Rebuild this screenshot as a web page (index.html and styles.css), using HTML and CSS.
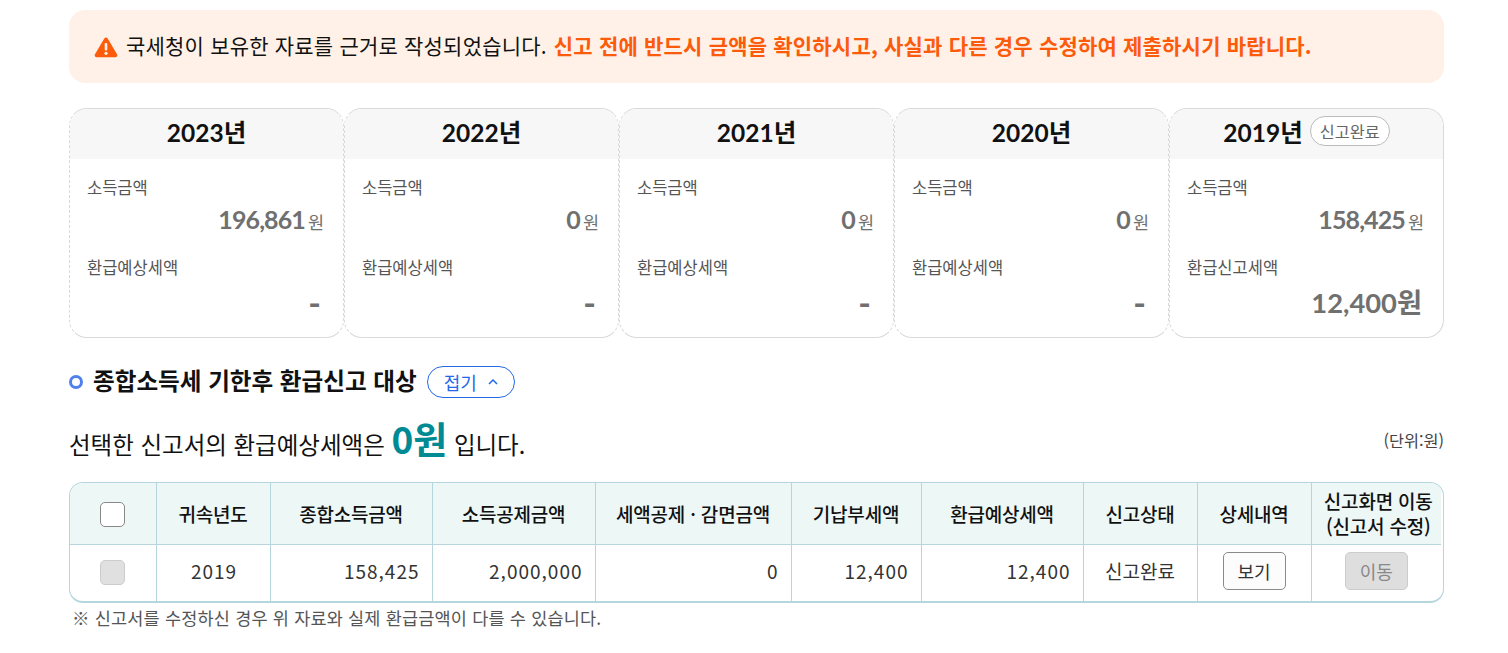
FILE: index.html
```html
<!DOCTYPE html>
<html lang="ko">
<head>
    <meta charset="UTF-8">
    <meta name="viewport" content="width=device-width, initial-scale=1.0">
    <title>종합소득세 기한후 환급신고</title>
    <link rel="stylesheet" href="styles.css">
</head>
<body>
    <div class="container">
        <!-- Notice -->
        <div class="notice">
            <svg class="notice-icon" width="24" height="22" viewBox="0 0 24 22">
                <path d="M12 1.5c-.7 0-1.3.4-1.7 1L1 18.3c-.8 1.4.1 3 1.700 3h18.600c1.600 0 2.500-1.600 1.700-3L13.700 2.500c-.4-.6-1-1-1.700-1z" fill="#fc5b0c"/>
                <rect x="10.700" y="7" width="2.600" height="7.500" rx="1" fill="#fff3e9"/>
                <circle cx="12" cy="17.300" r="1.600" fill="#fff3e9"/>
            </svg>
            <span>국세청이 보유한 자료를 근거로 작성되었습니다.</span>
            <strong>신고 전에 반드시 금액을 확인하시고, 사실과 다른 경우 수정하여 제출하시기 바랍니다.</strong>
        </div>

        <!-- Year cards -->
        <div class="cards">
            <div class="card">
                <div class="card-head">2023년</div>
                <div class="card-body">
                    <div class="label">소득금액</div>
                    <div class="amount"><b>196,861</b><span>원</span></div>
                    <div class="label label-second">환급예상세액</div>
                    <div class="amount-big dash">-</div>
                </div>
            </div>
            <div class="card">
                <div class="card-head">2022년</div>
                <div class="card-body">
                    <div class="label">소득금액</div>
                    <div class="amount"><b>0</b><span>원</span></div>
                    <div class="label label-second">환급예상세액</div>
                    <div class="amount-big dash">-</div>
                </div>
            </div>
            <div class="card">
                <div class="card-head">2021년</div>
                <div class="card-body">
                    <div class="label">소득금액</div>
                    <div class="amount"><b>0</b><span>원</span></div>
                    <div class="label label-second">환급예상세액</div>
                    <div class="amount-big dash">-</div>
                </div>
            </div>
            <div class="card">
                <div class="card-head">2020년</div>
                <div class="card-body">
                    <div class="label">소득금액</div>
                    <div class="amount"><b>0</b><span>원</span></div>
                    <div class="label label-second">환급예상세액</div>
                    <div class="amount-big dash">-</div>
                </div>
            </div>
            <div class="card">
                <div class="card-head">2019년<span class="badge">신고완료</span></div>
                <div class="card-body">
                    <div class="label">소득금액</div>
                    <div class="amount"><b>158,425</b><span>원</span></div>
                    <div class="label label-second">환급신고세액</div>
                    <div class="amount-big">12,400원</div>
                </div>
            </div>
        </div>

        <!-- Section title -->
        <div class="section-title">
            <i class="bullet"></i>
            <h2>종합소득세 기한후 환급신고 대상</h2>
            <button class="toggle">접기
                <svg width="10" height="6" viewBox="0 0 10 6"><path d="M1 5l4-4 4 4" fill="none" stroke="#2468e8" stroke-width="1.500"/></svg>
            </button>
        </div>

        <div class="summary">
            <p>선택한 신고서의 환급예상세액은 <em>0원</em> 입니다.</p>
            <span class="unit">(단위:원)</span>
        </div>

        <!-- Table -->
        <div class="table-wrap">
            <table>
                <colgroup>
                    <col class="c1"><col class="c2"><col class="c3"><col class="c4"><col class="c5">
                    <col class="c6"><col class="c7"><col class="c8"><col class="c9"><col class="c10">
                </colgroup>
                <thead>
                    <tr>
                        <th><span class="check"></span></th>
                        <th>귀속년도</th>
                        <th>종합소득금액</th>
                        <th>소득공제금액</th>
                        <th>세액공제 · 감면금액</th>
                        <th>기납부세액</th>
                        <th>환급예상세액</th>
                        <th>신고상태</th>
                        <th>상세내역</th>
                        <th class="th-move">신고화면 이동<br>(신고서 수정)</th>
                    </tr>
                </thead>
                <tbody>
                    <tr>
                        <td class="center"><span class="check check-off"></span></td>
                        <td class="center num">2019</td>
                        <td class="num">158,425</td>
                        <td class="num">2,000,000</td>
                        <td class="num">0</td>
                        <td class="num">12,400</td>
                        <td class="num">12,400</td>
                        <td class="center">신고완료</td>
                        <td class="center"><button class="btn">보기</button></td>
                        <td class="center"><button class="btn btn-off">이동</button></td>
                    </tr>
                </tbody>
            </table>
        </div>
        <p class="foot">※ 신고서를 수정하신 경우 위 자료와 실제 환급금액이 다를 수 있습니다.</p>
    </div>
</body>
</html>
```
FILE: styles.css
```css
* {
    box-sizing: border-box;
}
body {
    margin: 0;
    background: #fff;
    color: #111;
    font-family: "Noto Sans CJK KR", "Noto Sans", sans-serif;
}
.container {
    width: 1375px;
    margin-left: 69px;
    padding-top: 10px;
}

/* Notice */
.notice {
    display: flex;
    align-items: center;
    height: 73px;
    padding: 0 0 3px 25px;
    background: #fff1e7;
    border-radius: 16px;
    font-size: 21px;
    letter-spacing: 0.2px;
}
.notice-icon {
    margin: 3px 8px 0 0;
}
.notice strong {
    margin-left: 7px;
    color: #fc5b0c;
    font-weight: 700;
}

/* Cards */
.cards {
    display: flex;
    margin-top: 25px;
}
.card {
    width: 275px;
    height: 230px;
    border: 1px dashed #ccc;
    border-top-style: solid;
    border-bottom-style: solid;
    border-color: #d9d9d9;
    border-radius: 18px;
    overflow: hidden;
}
.card:last-child {
    border-right-style: solid;
}
.card-head {
    display: flex;
    align-items: center;
    justify-content: center;
    height: 50px;
    padding-bottom: 6px;
    background: #f7f7f7;
    font-family: "Lato", "Noto Sans CJK KR", sans-serif;
    font-size: 24.500px;
    font-weight: 700;
}
.badge {
    margin-left: 7px;
    padding: 0 9px;
    height: 30px;
    line-height: 28px;
    border: 1px solid #bbb;
    border-radius: 15px;
    background: #fff;
    color: #666;
    font-family: "Noto Sans CJK KR", sans-serif;
    font-size: 16.300px;
    font-weight: 400;
}
.card-body {
    padding: 17px 19px 0 17px;
    color: #555;
}
.label {
    height: 22px;
    line-height: 22px;
    font-size: 16.500px;
}
.label-second {
    margin-top: 20px;
}
.amount {
    display: flex;
    justify-content: flex-end;
    align-items: baseline;
    height: 38px;
    padding-top: 5px;
    line-height: 33px;
    color: #707070;
    font-family: "Lato", "Noto Sans CJK KR", sans-serif;
}
.amount b {
    font-size: 25px;
    letter-spacing: -0.9px;
}
.amount span {
    margin-left: 3px;
    font-family: "Noto Sans CJK KR", sans-serif;
    font-size: 17.500px;
}
.amount-big {
    margin-top: 7px;
    padding-right: 2px;
    text-align: right;
    line-height: 36px;
    color: #707070;
    font-family: "Lato", "Noto Sans CJK KR", sans-serif;
    font-size: 27.300px;
    font-weight: 700;
}
.dash {
    padding-right: 3px;
    font-size: 34px;
}

/* Section title */
.section-title {
    display: flex;
    align-items: center;
    margin-top: 28px;
    height: 32px;
}
.bullet {
    width: 14px;
    height: 14px;
    margin-right: 10px;
    border: 3px solid #4f80ee;
    border-radius: 50%;
}
.section-title h2 {
    margin: 0 0 5px;
    font-size: 23.600px;
    font-weight: 700;
}
.toggle {
    display: flex;
    align-items: center;
    gap: 11px;
    width: 88px;
    height: 32px;
    margin-left: 10px;
    padding: 0 0 0 16px;
    background: #fff;
    border: 1px solid #2468e8;
    border-radius: 16px;
    color: #2468e8;
    font-family: inherit;
    font-size: 18px;
}

/* Summary */
.summary {
    display: flex;
    justify-content: space-between;
    height: 52px;
    margin-top: 14px;
}
.summary p {
    margin: 0;
    font-size: 23.500px;
    line-height: 52px;
}
.summary em {
    color: #008a94;
    font-size: 37px;
    font-style: normal;
    font-weight: 700;
}
.unit {
    padding-top: 16px;
    color: #444;
    font-size: 16.300px;
}

/* Table */
.table-wrap {
    margin-top: 18px;
    border: 1px solid #b5d6dc;
    border-bottom-width: 2px;
    border-radius: 14px;
    overflow: hidden;
}
table {
    width: 1371px;
    border-collapse: collapse;
    table-layout: fixed;
}
.c1 { width: 86px; }
.c2 { width: 114px; }
.c3 { width: 162px; }
.c4 { width: 163px; }
.c5 { width: 196px; }
.c6 { width: 130px; }
.c7 { width: 162px; }
.c8 { width: 114px; }
.c9 { width: 114px; }
.c10 { width: 130px; }
th, td {
    border-right: 1px solid #b5d6dc;
}
th:last-child, td:last-child {
    border-right: 0;
}
th {
    height: 61px;
    padding: 0;
    background: #edf7f6;
    border-bottom: 1px solid #b5d6dc;
    font-size: 19px;
    font-weight: 500;
    line-height: 25px;
    letter-spacing: -0.2px;
}
th.th-move {
    padding-left: 4px;
}
td {
    height: 57px;
    padding: 0 12px 4px;
    text-align: right;
    color: #333;
    font-size: 19px;
}
td.num {
    padding-right: 12px;
    letter-spacing: 1px;
}
td.center {
    padding: 0 0 4px;
    text-align: center;
}
td.center.num {
    padding-left: 2px;
}
.check {
    display: inline-block;
    width: 25px;
    height: 25px;
    vertical-align: middle;
    background: #fff;
    border: 1px solid #888;
    border-radius: 5px;
}
.check-off {
    background: #e0e0e0;
    border-color: #ccc;
}
.btn {
    width: 63px;
    height: 38px;
    padding: 0;
    vertical-align: middle;
    background: #fcfcfc;
    border: 1px solid #8a8a8a;
    border-radius: 5px;
    color: #333;
    font-family: inherit;
    font-size: 18px;
}
.btn-off {
    background: #dedede;
    border-color: #ccc;
    color: #888;
}
.foot {
    margin: 2px 0 0 3px;
    color: #555;
    font-size: 17.500px;
    letter-spacing: 0.18px;
}
```
